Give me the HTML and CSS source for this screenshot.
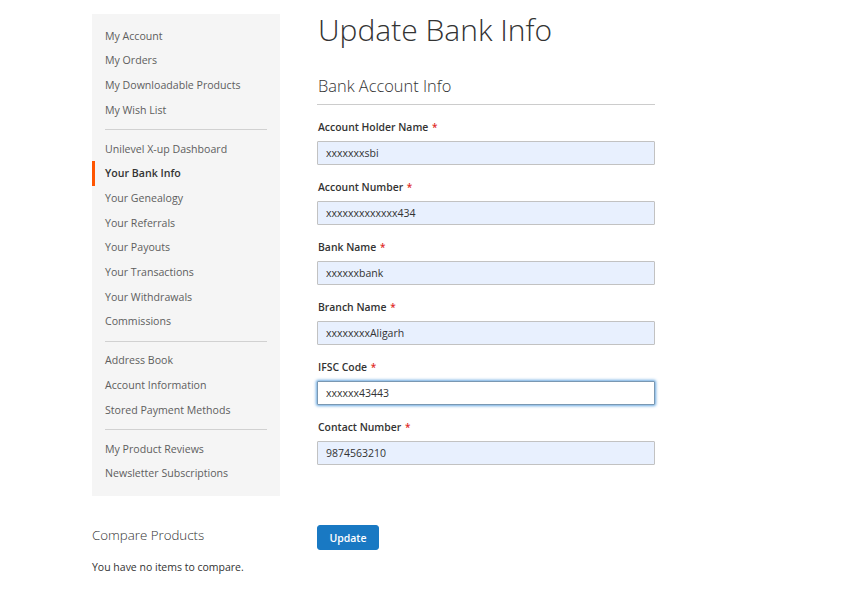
FILE: index.html
```html
<!DOCTYPE html>
<html lang="en">
<head>
<meta charset="utf-8">
<title>Update Bank Info</title>
<link rel="stylesheet" href="styles.css">
</head>
<body>
<div class="page">
  <aside class="sidebar">
    <nav class="account-nav">
      <ul class="nav-list">
        <li class="nav-item"><a href="#">My Account</a></li>
        <li class="nav-item"><a href="#">My Orders</a></li>
        <li class="nav-item"><a href="#">My Downloadable Products</a></li>
        <li class="nav-item"><a href="#">My Wish List</a></li>
        <li class="delimiter"></li>
        <li class="nav-item"><a href="#">Unilevel X-up Dashboard</a></li>
        <li class="nav-item current"><strong>Your Bank Info</strong></li>
        <li class="nav-item"><a href="#">Your Genealogy</a></li>
        <li class="nav-item"><a href="#">Your Referrals</a></li>
        <li class="nav-item"><a href="#">Your Payouts</a></li>
        <li class="nav-item"><a href="#">Your Transactions</a></li>
        <li class="nav-item"><a href="#">Your Withdrawals</a></li>
        <li class="nav-item"><a href="#">Commissions</a></li>
        <li class="delimiter"></li>
        <li class="nav-item"><a href="#">Address Book</a></li>
        <li class="nav-item"><a href="#">Account Information</a></li>
        <li class="nav-item"><a href="#">Stored Payment Methods</a></li>
        <li class="delimiter"></li>
        <li class="nav-item"><a href="#">My Product Reviews</a></li>
        <li class="nav-item"><a href="#">Newsletter Subscriptions</a></li>
      </ul>
    </nav>
    <div class="compare">
      <div class="compare-title">Compare Products</div>
      <div class="compare-empty">You have no items to compare.</div>
    </div>
  </aside>
  <main class="main">
    <h1 class="page-title">Update Bank Info</h1>
    <form class="bank-form" onsubmit="return false">
      <div class="legend">Bank Account Info</div>
      <div class="field">
        <label class="label">Account Holder Name <span class="req">*</span></label>
        <input class="input autofill" type="text" value="xxxxxxxsbi">
      </div>
      <div class="field">
        <label class="label">Account Number <span class="req">*</span></label>
        <input class="input autofill" type="text" value="xxxxxxxxxxxxx434">
      </div>
      <div class="field">
        <label class="label">Bank Name <span class="req">*</span></label>
        <input class="input autofill" type="text" value="xxxxxxbank">
      </div>
      <div class="field">
        <label class="label">Branch Name <span class="req">*</span></label>
        <input class="input autofill" type="text" value="xxxxxxxxAligarh">
      </div>
      <div class="field">
        <label class="label">IFSC Code <span class="req">*</span></label>
        <input class="input focused" type="text" value="xxxxxx43443">
      </div>
      <div class="field">
        <label class="label">Contact Number <span class="req">*</span></label>
        <input class="input autofill" type="text" value="9874563210">
      </div>
      <div class="actions">
        <button class="btn-primary" type="submit">Update</button>
      </div>
    </form>
  </main>
</div>
</body>
</html>
```

FILE: styles.css
```css
* { box-sizing: border-box; }
html, body {
  margin: 0;
  padding: 0;
  background: #fff;
}
body {
  font-family: "Open Sans", "Liberation Sans", sans-serif;
  color: #333;
  font-size: 10.5px;
}
.page {
  display: flex;
  align-items: flex-start;
  padding: 14px 0 0 92px;
}
.sidebar {
  width: 188px;
  flex: none;
}
.account-nav {
  background: #f5f5f5;
  padding: 9.67px 0;
}
.nav-list {
  list-style: none;
  margin: 0;
  padding: 0;
}
.nav-item {
  display: block;
  line-height: 16.67px;
  padding: 4px 0;
}
.nav-item a {
  display: block;
  padding-left: 13px;
  color: #5e5e5e;
  text-decoration: none;
  font-size: 10.6px;
}
.nav-item.current {
  border-left: 3px solid #ff5501;
}
.nav-item.current strong {
  display: block;
  padding-left: 10px;
  font-weight: 600;
  color: #333;
  font-size: 10.6px;
}
.delimiter {
  display: block;
  border-top: 1px solid #d1d1d1;
  margin: 6.67px 13px;
}
.compare {
  padding-top: 29px;
}
.compare-title {
  font-size: 13.3px;
  font-weight: 300;
  line-height: 20px;
  color: #333;
}
.compare-empty {
  margin-top: 14px;
  font-size: 10.5px;
  line-height: 16px;
}
.main {
  margin-left: 37px;
  width: 338px;
  flex: none;
}
.page-title {
  margin: 0;
  font-size: 30px;
  font-weight: 300;
  line-height: 32px;
  color: #333;
  padding-left: 1px;
}
.bank-form {
  margin: 0;
}
.legend {
  margin-top: 29px;
  font-size: 16.4px;
  font-weight: 300;
  line-height: 22px;
  padding-left: 1px;
  padding-bottom: 7px;
  border-bottom: 1px solid #cccccc;
  margin-bottom: 14px;
}
.field {
  display: flex;
  flex-direction: column;
  margin-bottom: 14px;
}
.label {
  font-weight: 600;
  font-size: 10.4px;
  line-height: 16px;
  margin-bottom: 6px;
  padding-left: 1px;
}
.req {
  color: #e02b27;
  font-size: 10px;
  margin-left: 1px;
}
.input {
  height: 24px;
  width: 100%;
  border: 1px solid #c2c2c2;
  border-radius: 1px;
  padding: 0 8px;
  font-family: "Open Sans", "Liberation Sans", sans-serif;
  font-size: 10.5px;
  color: #333;
  outline: none;
}
.input.autofill {
  background: #e8f0fe;
}
.input.focused {
  background: #fff;
  border-color: #7a98b2;
  box-shadow: 0 0 3px 1px #68a8e0;
}
.actions {
  margin-top: 60px;
}
.btn-primary {
  background: #1979c3;
  border: 1px solid #1979c3;
  color: #fff;
  font-family: "Open Sans", "Liberation Sans", sans-serif;
  font-size: 10.5px;
  font-weight: 600;
  height: 25px;
  width: 62px;
  border-radius: 3px;
  padding: 0;
  cursor: pointer;
}
```
